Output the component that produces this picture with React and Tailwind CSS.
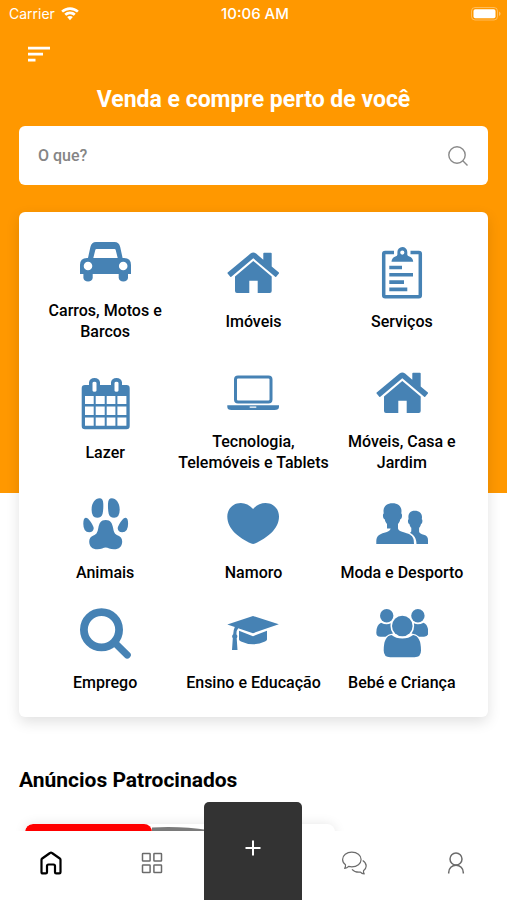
import { useState } from "react";

const HouseIcon = () => (
  <>
    <path d="M.7 25.5 23.5 6.6q2.8-2 5.6 0l7.2 6.1V6.5q0-.8.8-.8h6.8q.8 0 .8.8v13l7.2 6q.5.5 0 1l-2.7 3.3q-.5.4-1 0L26.3 11.3l-22 18.5q-.5.4-1 0L.6 26.5q-.4-.5.1-1z" />
    <path d="M26.3 14 44.7 29.5V44q0 2-2 2h-12V33.7h-8.4V46H10q-2 0-2-2V29.5z" />
  </>
);

const CarIcon = () => (
  <path
    fillRule="evenodd"
    d="M9 22 11.4 11Q12.6 6 17 6h18.500q4.500 0 5.700 5L43.600 22H45q7 0 7 7v9h-3v4a4.700 4 0 0 1-9.300 0v-4H13.700v4a4.700 4 0 0 1-9.300 0v-4H1v-9q0-7 7-7zM17.500 13q-1 0-1.200 1L14.300 22h24.400l-2-8q-.2-1-1.200-1zM9 25.700a4.300 4.300 0 1 0 0 8.600 4.300 4.300 0 0 0 0-8.600zm35.200 0a4.300 4.300 0 1 0 0 8.600 4.300 4.300 0 0 0 0-8.600z"
  />
);

const ClipboardIcon = () => (
  <>
    <path
      d="M18 5.500H9.200Q7.700 5.500 7.700 7v41.300q0 1.500 1.500 1.500h33.600q1.500 0 1.500-1.500V7q0-1.500-1.500-1.500H34.500"
      fill="none"
      stroke="currentColor"
      strokeWidth="3.500"
    />
    <path
      fillRule="evenodd"
      d="M26.300 0a5 5 0 0 1 5 5v2.500q0 1.500 2 2 3.700 1.200 3.900 5.300H15.500q.2-4.100 3.900-5.300 2-.5 2-2V5a5 5 0 0 1 4.900-5zm0 3.500a2.100 2.100 0 1 0 0 4.200 2.100 2.100 0 0 0 0-4.200z"
    />
    <path d="M13.300 18.700H26v3.600H13.300zM13.300 26H37v3.600H13.300zM13.300 33.300H28v3.600H13.300zM13.300 40.600h18v3.600h-18z" />
  </>
);

const CalendarIcon = () => (
  <path
    fillRule="evenodd"
    d="M10 7V4.500a5.500 4.500 0 0 1 11 0V7h11V4.500a5.500 4.500 0 0 1 11 0V7h4.500q3.200 0 3.200 3.200v37.900q0 3.200-3.200 3.200H6q-3.300 0-3.300-3.200V10.200Q2.700 7 6 7zM13.500 5v7.500q0 1.300 2 1.300t2-1.300V5q0-1.300-2-1.300t-2 1.300zm22 0v7.500q0 1.300 2 1.300t2-1.300V5q0-1.300-2-1.300t-2 1.300zM6 18v8h8.700v-8zm10.700 0v8h9v-8zm11 0v8h8.700v-8zm10.700 0v8h9v-8zM6 28.500V37h8.700v-8.500zm10.700 0V37h9v-8.500zm11 0V37h8.700v-8.500zm10.700 0V37h9v-8.500zM6 39.500v8.200h8.700v-8.200zm10.700 0v8.200h9v-8.200zm11 0v8.200h8.700v-8.200zm10.700 0v8.200h9v-8.200z"
  />
);

const LaptopIcon = () => (
  <>
    <rect
      x="8.500"
      y="10"
      width="35.500"
      height="25"
      rx="2.500"
      fill="none"
      stroke="currentColor"
      strokeWidth="3"
    />
    <path
      fillRule="evenodd"
      d="M.3 38.300H52v1.500q0 3.200-4.500 3.200h-43Q.3 43 .3 39.800zM22.700 39.500v1.200h6.600v-1.200z"
    />
  </>
);

const PawIcon = () => (
  <>
    <path d="M20.500.3q3.600 0 3.800 5.400.2 6-.7 10-1 4-5.400 4-5.600 0-5.600-8C12.600 4.500 16.500.3 20.500.3zM32.800.3q-3.600 0-3.800 5.400-.2 6 .7 10 1 4 5.400 4 5.600 0 5.600-8C40.700 4.500 36.800.3 32.800.3z" />
    <path d="M6.800 19.700q2.200 0 5 4.300 3 4.500 2.900 6.500-.4 3.700-4.500 3.700-5.900 0-5.900-8.500 0-6 2.500-6zM46.600 19.700q-2.200 0-5 4.300-3 4.500-2.900 6.500.4 3.700 4.500 3.700 5.900 0 5.900-8.500 0-6-2.500-6z" />
    <path d="M26.700 22c5 0 6.500 3.500 7.300 7.500 1 5 1.500 6.500 5 8 2.700 1.200 4.200 3 4.200 6 0 5-3.200 7.800-8.200 7.800-4 0-6-1.800-8.300-1.800s-4.300 1.800-8.300 1.800c-5 0-8.200-2.800-8.200-7.800 0-3 1.500-4.800 4.200-6 3.500-1.500 4-3 5-8 .8-4 2.300-7.500 7.300-7.500z" />
  </>
);

const HeartIcon = () => (
  <path d="M26.100 11C29.500 7 34 5 38.500 5 46.500 5 52 11 52 18.500 52 31 40 40 28 45.600q-1.900.8-3.800 0C12 40 .3 31 .3 18.500.3 11 6 5 13.800 5c4.500 0 8.900 2 12.300 6z" />
);

const PeopleIcon = () => (
  <>
    <path d="M16.500 5.300c5.500 0 9 3 9 7.700l-.2 2.500c1.200.2 1 5.500-1 5.800-.4 2.200-1.300 3.700-2.300 4.700v4.500c.4 2.200 3 2.900 6.500 4 6 1.800 8.500 3.500 9.200 7.500l.3 4H.3v-3c.2-5 3-6.600 8-8.200 4-1.200 5.900-2 6.300-4.300H11V26c-1-1-1.900-2.500-2.300-4.700-2-.3-2.200-5.600-1-5.800L7.500 13c0-4.700 3.500-7.700 9-7.700z" />
    <path d="M38.700 12.700c4.600 0 7.300 2.500 7.300 6.500l-.2 2c1 .3.800 4.500-.8 4.800-.4 2-1 3-1.900 3.800v3.700c.3 2 2.200 2.500 4.600 3.200 3.300 1 4.300 2.500 4.300 5.300v4H40.500c-.1-5.500-2-9-6.700-11.300q1.300-.5 1.500-1.500v-3.400c-.9-.8-1.500-1.800-1.900-3.800-1.600-.3-1.800-4.500-.8-4.800l-.2-2c0-4 2-6.500 6.300-6.500z" />
  </>
);

const SearchIcon = () => (
  <g fill="none" stroke="currentColor">
    <circle cx="22.500" cy="21.700" r="17.600" strokeWidth="7.800" />
    <path d="m36 35 12.200 12" strokeWidth="7.200" strokeLinecap="round" />
  </g>
);

const CapIcon = () => (
  <>
    <path d="M26 8 51.800 16.300 26 25.200 11.200 20.300Q9.500 22 9.400 26.300q1.800 1.500.3 4l.8 11.700H5l.8-11.700q-1.600-2.500.4-4Q6.300 22 7.800 19L.3 16.600z" />
    <path d="M12 22.800 26 28.200 40 22.800v8.700q0 1.200-2 2-12 5.600-24 0-2-.8-2-2z" />
  </>
);

const GroupIcon = () => (
  <>
    <circle cx="10.700" cy="7.700" r="6.700" />
    <circle cx="41.900" cy="7.700" r="6.700" />
    <path d="M5 14.700q5.700 3 9.700.5-1 6.500 2.300 10.300-4.500.5-7.500 3.200H4.500q-4.200 0-4.200-4 0-8 4.700-10zM47.600 14.700q-5.700 3-9.700.5 1 6.500-2.300 10.300 4.500.5 7.500 3.200h5q4.200 0 4.200-4 0-8-4.700-10z" />
    <circle cx="26.300" cy="18" r="10.300" />
    <path d="M15.500 27q4.500 3.600 10.800 3.600T37.100 27Q45 28 45 42.500q0 6.800-6.500 6.800H14.200q-6.500 0-6.500-6.800Q7.700 28 15.500 27z" />
  </>
);

const categories = [
  { name: "Carros, Motos e Barcos", Icon: CarIcon },
  { name: "Imóveis", Icon: HouseIcon },
  { name: "Serviços", Icon: ClipboardIcon },
  { name: "Lazer", Icon: CalendarIcon },
  { name: "Tecnologia, Telemóveis e Tablets", Icon: LaptopIcon },
  { name: "Móveis, Casa e Jardim", Icon: HouseIcon },
  { name: "Animais", Icon: PawIcon },
  { name: "Namoro", Icon: HeartIcon },
  { name: "Moda e Desporto", Icon: PeopleIcon },
  { name: "Emprego", Icon: SearchIcon },
  { name: "Ensino e Educação", Icon: CapIcon },
  { name: "Bebé e Criança", Icon: GroupIcon },
];

function StatusBar() {
  return (
    <div className="grid grid-cols-3 items-center h-7 pl-[9px] pr-[6px] font-['Inter',sans-serif] text-[14px] leading-5 text-white">
      <div className="flex items-center gap-[6px]">
        <span>Carrier</span>
        <svg className="w-[18px] h-[14px]" viewBox="0 0 18 14" fill="currentColor">
          <path d="M9 .2c3.400 0 6.500 1.400 8.800 3.500L16 5.600A10.200 10.200 0 0 0 9 2.900 10.200 10.200 0 0 0 2 5.600L.2 3.700A12.800 12.800 0 0 1 9 .2z" />
          <path d="M9 4.600c2.200 0 4.200.9 5.700 2.200l-1.900 2A5.700 5.700 0 0 0 9 7.300a5.700 5.700 0 0 0-3.800 1.500l-1.900-2A8.400 8.400 0 0 1 9 4.600z" />
          <path d="M9 8.900c1.100 0 2.100.4 2.800 1.100L9 13.300 6.200 10c.7-.7 1.700-1.100 2.800-1.100z" />
        </svg>
      </div>
      <span className="text-center text-[15px] font-medium">10:06 AM</span>
      <svg
        className="justify-self-end w-[30px] h-[14px]"
        viewBox="0 0 30 14"
        fill="currentColor"
      >
        <rect
          x=".5"
          y=".5"
          width="26"
          height="12.500"
          rx="3.500"
          fill="none"
          stroke="currentColor"
          opacity=".35"
        />
        <rect x="2.500" y="2.300" width="22" height="9" rx="1.800" />
        <path d="M28 4.500q1.600.8 1.600 2.200T28 9z" opacity=".4" />
      </svg>
    </div>
  );
}

function BottomNav() {
  return (
    <nav className="fixed bottom-0 inset-x-0 h-[69px] bg-white grid grid-cols-5 grid-rows-1 text-[#6b6b6b]">
      <button aria-label="Início" className="flex items-center justify-center pb-[6px] text-black">
        <svg
          className="w-6 h-6"
          viewBox="0 0 24 24"
          fill="none"
          stroke="currentColor"
          strokeWidth="2.200"
          strokeLinejoin="round"
        >
          <path d="M2.500 8.800Q2.500 8 3.200 7.500L11 2q1-.8 2 0l7.800 5.500q.7.500.7 1.300v12.400q0 1.200-1.200 1.200h-3.100q-1.200 0-1.200-1.200V15q0-1.500-1.500-1.500h-5Q8 13.500 8 15v6.200q0 1.200-1.200 1.200H3.700q-1.200 0-1.200-1.200z" />
        </svg>
      </button>
      <button aria-label="Categorias" className="flex items-center justify-center pb-[6px]">
        <svg
          className="w-6 h-6"
          viewBox="0 0 24 24"
          fill="none"
          stroke="currentColor"
          strokeWidth="1.500"
        >
          <rect x="2.500" y="2.500" width="7.600" height="7.600" rx=".6" />
          <rect x="13.900" y="2.500" width="7.600" height="7.600" rx=".6" />
          <rect x="2.500" y="13.900" width="7.600" height="7.600" rx=".6" />
          <rect x="13.900" y="13.900" width="7.600" height="7.600" rx=".6" />
        </svg>
      </button>
      <div className="flex items-end justify-center">
        <button
          aria-label="Novo anúncio"
          className="w-[98px] h-[98px] shrink-0 rounded-t-[5px] bg-[#333333] text-white flex items-center justify-center pb-[6px]"
        >
          <svg
            className="w-4 h-4"
            viewBox="0 0 16 16"
            stroke="currentColor"
            strokeWidth="2"
          >
            <path d="M8 .5v15M.5 8h15" />
          </svg>
        </button>
      </div>
      <button aria-label="Mensagens" className="flex items-center justify-center pb-[6px]">
        <svg
          className="w-[25px] h-6"
          viewBox="0 0 25 24"
          fill="none"
          stroke="currentColor"
          strokeWidth="1.200"
          strokeLinejoin="round"
        >
          <path d="M9.800 1.200c5.300 0 9.300 3.200 9.300 7.300s-4 7.300-9.300 7.300q-1.700 0-3.200-.4-1.500 1.800-3.900 2 1-1.500.8-3.700C1.700 12.500.6 10.700.6 8.500c0-4.100 4-7.300 9.200-7.300z" />
          <path d="M20.700 9.500q3.500 2.200 3.500 5.500 0 2.700-2.700 4.700-.2 1.800.7 3.200-2.500-.2-3.700-1.800-5.500.7-8.500-2.800" />
        </svg>
      </button>
      <button aria-label="Perfil" className="flex items-center justify-center pb-[6px]">
        <svg
          className="w-6 h-6"
          viewBox="0 0 24 24"
          fill="none"
          stroke="currentColor"
          strokeWidth="1.500"
        >
          <circle cx="12" cy="8" r="6" />
          <path d="M4.700 22.500v-1a7.300 7.300 0 0 1 14.600 0v1" />
        </svg>
      </button>
    </nav>
  );
}

export default function App() {
  const [query, setQuery] = useState("");

  return (
    <div className="min-h-screen bg-white overflow-hidden font-['Roboto',sans-serif] text-black">
      <header className="bg-[#ff9800] pb-[308px]">
        <StatusBar />
        <button aria-label="Menu" className="block mt-[18px] ml-7 w-[22px] h-4 text-white">
          <svg className="w-full h-full" viewBox="0 0 22 16" fill="currentColor">
            <path d="M0 .8h22v2.600H0zM0 6.800h15v2.600H0zM0 12.800h7.500v2.600H0z" />
          </svg>
        </button>
        <h1 className="mt-6 mb-3 text-center text-white text-[23px] leading-7 font-bold">
          Venda e compre perto de você
        </h1>
        <label className="mx-[19px] h-[59px] flex items-center rounded-md bg-white pl-[19px] pr-5">
          <input
            value={query}
            onChange={(ev) => setQuery(ev.target.value)}
            placeholder="O que?"
            aria-label="O que?"
            className="min-w-0 flex-1 text-[16px] font-medium outline-none placeholder:text-[#858585]"
          />
          <svg
            className="w-5 h-5 text-[#8a8a8a]"
            viewBox="0 0 20 20"
            fill="none"
            stroke="currentColor"
            strokeWidth="1.400"
          >
            <circle cx="9" cy="9" r="8.200" />
            <path d="m14.800 14.800 4.700 4.700" />
          </svg>
        </label>
      </header>

      <main>
        <section className="relative -mt-[281px] mx-[19px] px-3 py-6 grid grid-cols-3 gap-y-[25px] items-center rounded-md bg-white shadow-[0_5px_14px_rgba(0,0,0,0.12)]">
          {categories.map(({ name, Icon }) => (
            <a key={name} href="#" className="-mx-1 flex flex-col items-center gap-3">
              <svg
                className="w-[52px] h-[52px] text-[#4682b4]"
                viewBox="0 0 52 52"
                fill="currentColor"
              >
                <Icon />
              </svg>
              <span className="text-center text-[16px] leading-[21px] font-medium">
                {name}
              </span>
            </a>
          ))}
        </section>

        <section className="pt-[49px]">
          <h2 className="px-[19px] text-[21px] leading-7 font-bold">
            Anúncios Patrocinados
          </h2>
          <article className="mt-[30px] ml-[25px] w-[310px] h-16 rounded-lg overflow-hidden bg-white shadow-[0_0_12px_rgba(0,0,0,0.1)]">
            <div className="flex">
              <div className="w-[127px] h-7 rounded-t-lg bg-[#ff0000]" />
              <svg
                className="w-[110px] h-7 text-[#7a7a7a]"
                viewBox="0 0 110 28"
                fill="currentColor"
              >
                <path d="M0 3.500Q30 2 56 6l54 12v10H0z" />
              </svg>
            </div>
          </article>
        </section>
      </main>

      <BottomNav />
    </div>
  );
}
